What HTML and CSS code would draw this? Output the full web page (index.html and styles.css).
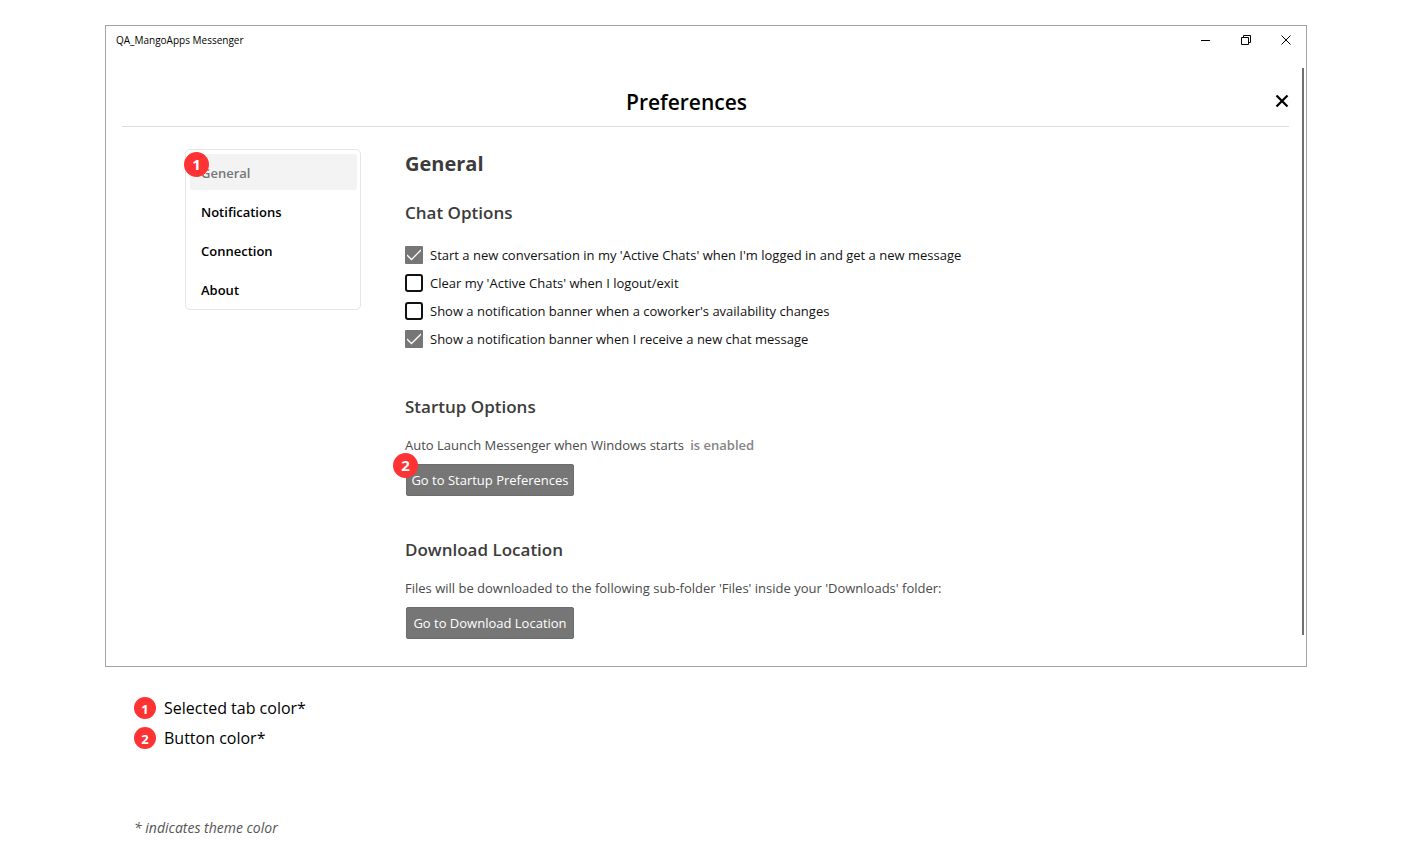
FILE: index.html
```html
<!DOCTYPE html>
<html lang="en">
<head>
<meta charset="utf-8">
<title>QA_MangoApps Messenger</title>
<link rel="stylesheet" href="styles.css">
</head>
<body>
<main class="window">
  <header class="titlebar">
    <span class="titlebar-name">QA_MangoApps Messenger</span>
    <div class="titlebar-controls">
      <button class="control" type="button" aria-label="Minimize"><svg width="10" height="10" viewBox="0 0 10 10"><path d="M0 5.500H9" /></svg></button>
      <button class="control" type="button" aria-label="Restore"><svg width="10" height="10" viewBox="0 0 10 10"><path d="M.5 2.500H7.500V9.500H.5ZM2.500 2.500V.5H9.500V7.500H7.500" /></svg></button>
      <button class="control" type="button" aria-label="Close window"><svg width="10" height="10" viewBox="0 0 10 10"><path d="M.5 .5 9.500 9.500M9.500 .5 .5 9.500" /></svg></button>
    </div>
  </header>
  <div class="body">
    <div class="page">
      <div class="page-head">
        <h1 class="page-title">Preferences</h1>
        <button class="page-close" type="button" aria-label="Close preferences"><svg width="14" height="14" viewBox="0 0 14 14"><path d="M1.500 .5 12.500 11.500M12.500 .5 1.500 11.500" /></svg></button>
      </div>
      <div class="columns">
        <nav class="tabs">
          <a class="tab tab-selected" href="#general">General</a>
          <a class="tab" href="#notifications">Notifications</a>
          <a class="tab" href="#connection">Connection</a>
          <a class="tab" href="#about">About</a>
          <span class="marker marker-tab">1</span>
        </nav>
        <div class="content" id="general">
          <h2 class="content-title">General</h2>
          <section class="section">
            <h3 class="section-title">Chat Options</h3>
            <div class="options">
              <label class="option"><input class="check" type="checkbox" checked>Start a new conversation in my 'Active Chats' when I'm logged in and get a new message</label>
              <label class="option"><input class="check" type="checkbox">Clear my 'Active Chats' when I logout/exit</label>
              <label class="option"><input class="check" type="checkbox">Show a notification banner when a coworker's availability changes</label>
              <label class="option"><input class="check" type="checkbox" checked>Show a notification banner when I receive a new chat message</label>
            </div>
          </section>
          <section class="section">
            <h3 class="section-title">Startup Options</h3>
            <p class="note">Auto Launch Messenger when Windows starts <strong class="state">is enabled</strong></p>
            <div class="action"><button class="button" type="button">Go to Startup Preferences</button><span class="marker marker-button">2</span></div>
          </section>
          <section class="section">
            <h3 class="section-title">Download Location</h3>
            <p class="note">Files will be downloaded to the following sub-folder 'Files' inside your 'Downloads' folder:</p>
            <div class="action"><button class="button" type="button">Go to Download Location</button></div>
          </section>
        </div>
      </div>
    </div>
    <div class="scrollbar"></div>
  </div>
</main>
<footer class="legend">
  <ol class="legend-list">
    <li class="legend-item"><span class="dot">1</span>Selected tab color*</li>
    <li class="legend-item"><span class="dot">2</span>Button color*</li>
  </ol>
  <p class="footnote">* indicates theme color</p>
</footer>
</body>
</html>
```
FILE: styles.css
```css
* {
  box-sizing: border-box;
}

body {
  margin: 0;
  padding: 25px 112px 0 105px;
  background: #fff;
  color: #000;
  font: 13px/20px "Open Sans", "Noto Sans", sans-serif;
}

h1, h2, h3, p, ol {
  margin: 0;
  padding: 0;
}

button {
  margin: 0;
  border: 0;
  background: none;
  font: inherit;
}

svg {
  display: block;
  fill: none;
  stroke: #000;
}

.window {
  border: 1px solid #a3a3a3;
  padding-bottom: 27px;
}

.titlebar {
  display: flex;
  justify-content: space-between;
  align-items: center;
  height: 28px;
  padding-left: 10px;
}

.titlebar-name {
  font-size: 10px;
}

.titlebar-controls {
  display: flex;
}

.control {
  display: grid;
  place-items: center;
  width: 40px;
  height: 28px;
  padding: 0;
}

.body {
  display: flex;
  padding: 14px 2px 0 16px;
}

.page {
  flex: 1;
  min-width: 0;
}

.scrollbar {
  width: 2px;
  margin: 0 0 4px 13px;
  background: #707070;
}

.page-head {
  display: flex;
  align-items: center;
  height: 59px;
  padding-top: 9px;
  border-bottom: 1px solid #dcdcdc;
}

.page-title {
  flex: 1;
  text-align: center;
  font-size: 21px;
  line-height: 28px;
  font-weight: 600;
}

.page-close {
  display: flex;
  justify-content: flex-end;
  width: 38px;
  padding: 0;
}

.page-close svg {
  stroke-width: 2.2;
}

.columns {
  display: flex;
  align-items: flex-start;
  gap: 44px;
  padding: 22px 0 0 63px;
}

.tabs {
  position: relative;
  display: flex;
  flex-direction: column;
  gap: 3px;
  width: 176px;
  padding: 4px 3px 2px 4px;
  border: 1px solid #e6e6e6;
  border-radius: 5px;
}

.tab {
  padding: 9px 11px 7px;
  border-radius: 3px;
  color: #000;
  font-weight: 600;
  text-decoration: none;
}

.tab-selected {
  background: #f3f3f3;
  color: #767676;
}

.marker,
.dot {
  display: grid;
  place-items: center;
  padding-bottom: 2px;
  border-radius: 50%;
  background: #ff3333;
  color: #fff;
  font-weight: 700;
}

.marker {
  position: absolute;
  width: 25px;
  height: 25px;
  font-size: 15px;
}

.marker-tab {
  left: -2px;
  top: 2px;
}

.marker-button {
  left: -13px;
  top: -11px;
}

.content {
  flex: 1;
  display: flex;
  flex-direction: column;
  gap: 40px;
}

.content-title {
  margin-bottom: -20px;
  color: #3c3c3c;
  font-size: 20px;
  line-height: 30px;
  font-weight: 700;
}

.section-title {
  color: #3c3c3c;
  font-size: 17px;
  line-height: 28px;
  font-weight: 600;
}

.options {
  display: flex;
  flex-direction: column;
  gap: 8px;
  margin: 18px 0 4px;
}

.option {
  display: flex;
  align-items: center;
  gap: 7px;
  color: #111;
}

.check {
  appearance: none;
  width: 18px;
  height: 18px;
  margin: 0;
  border: 2px solid #111;
  border-radius: 3px;
}

.check:checked {
  border-color: #767676;
  border-radius: 1px;
  background: #767676 url("data:image/svg+xml,%3Csvg xmlns='http://www.w3.org/2000/svg' viewBox='0 0 18 18'%3E%3Cpath d='M2 9 6.500 13.500 16 4' fill='none' stroke='white' stroke-width='1.300'/%3E%3C/svg%3E") border-box center / 18px 18px;
}

.note {
  margin-top: 14px;
  color: #4a4a4a;
}

.state {
  margin-left: 3px;
  color: #858585;
  font-weight: 600;
}

.action {
  position: relative;
  margin: 9px 0 0 1px;
}

.button {
  display: block;
  width: 168px;
  height: 32px;
  padding: 0;
  border: 1px solid #6d6d6d;
  border-radius: 2px;
  background: #767676;
  color: #fff;
  white-space: nowrap;
}

.legend {
  padding: 29px;
}

.legend-list {
  display: flex;
  flex-direction: column;
  gap: 6px;
  list-style: none;
}

.legend-item {
  display: flex;
  align-items: center;
  gap: 8px;
  font-size: 16px;
  line-height: 24px;
}

.dot {
  width: 22px;
  height: 22px;
  font-size: 13px;
}

.footnote {
  margin-top: 68px;
  color: #555;
  font-size: 14px;
  font-style: italic;
}
```
